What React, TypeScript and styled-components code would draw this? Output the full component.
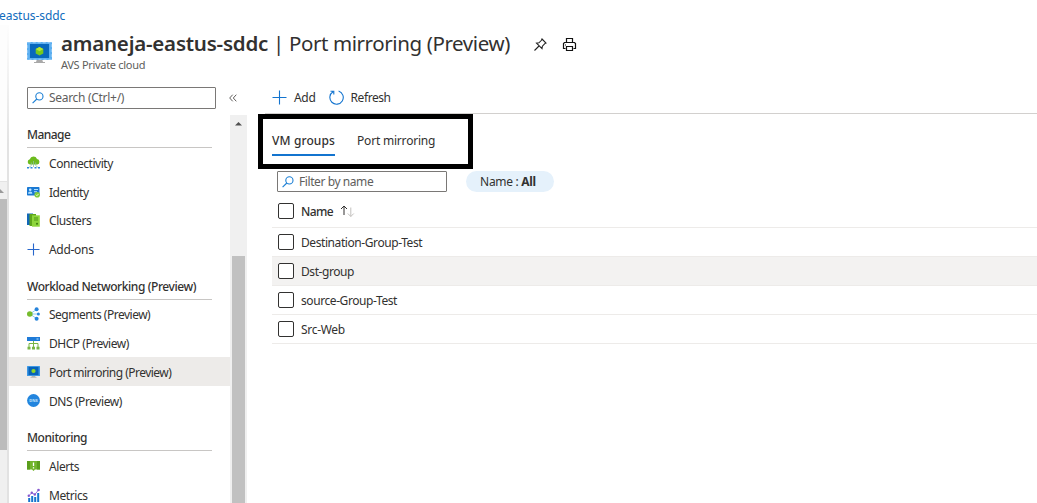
import React from 'react';
import styled, { createGlobalStyle } from 'styled-components';

const GlobalStyle = createGlobalStyle`
  * { box-sizing: border-box; }
  body { margin: 0; background: #fff; overflow: hidden; }
  svg { display: block; flex: none; }
`;

const Page = styled.div`
  display: flex;
  flex-direction: column;
  width: 1037px;
  height: 503px;
  overflow: hidden;
  background: #fff;
  color: #323130;
  font: 12px/16px 'Noto Sans', 'Open Sans', sans-serif;
`;
const Label = styled.span<{ $track?: number }>`
  white-space: pre;
  letter-spacing: ${(p) => p.$track ?? -0.42}px;
`;
const Breadcrumb = styled.div`
  height: 25px;
  padding-top: 8px;
  margin-left: -1px;
  color: #0f6cbd;
`;
const Body = styled.div`
  display: flex;
  flex: 1;
  min-height: 0;
`;
const Rail = styled.div`
  display: flex;
  flex-direction: column;
  flex: none;
  width: 7px;
  padding-top: 156px;
  background: #fdfdfd;
`;
const RailTrack = styled.div`
  flex: 1;
  background: #f0f0f0;
  border-top: 1px solid #e3e3e3;
`;
const RailArrow = styled.div`
  height: 17px;
  padding-top: 7px;
`;
const RailThumb = styled.div`
  height: 251px;
  background: #bcbcbc;
`;
const Edge = styled.div`
  flex: none;
  width: 2px;
  background: linear-gradient(180deg, #fdfdfd, #e2e2e2 25%);
`;
const Blade = styled.div`
  display: flex;
  flex-direction: column;
  flex: 1;
  min-width: 0;
`;
const Header = styled.header`
  display: flex;
  height: 62px;
  padding: 0 0 0 18px;
`;
const HeaderIcon = styled.div`
  width: 34px;
  padding-top: 17px;
`;
const Titles = styled.div`
  width: 450px;
  padding-top: 4px;
`;
const Title = styled.h1`
  margin: 0;
  display: flex;
  white-space: pre;
  font-size: 20.5px;
  line-height: 29px;
  font-weight: 400;
  color: #323130;
  b { font-weight: 600; }
`;
const Subtitle = styled.div`
  font-size: 11px;
  line-height: 14px;
  color: #605e5c;
`;
const HeaderActions = styled.div`
  display: flex;
  gap: 14px;
  padding: 12px 0 0 22px;
`;
const Columns = styled.div`
  display: flex;
  flex: 1;
  min-height: 0;
`;
const Sidebar = styled.nav`
  flex: none;
  width: 238px;
  display: flex;
  flex-direction: column;
`;
const SearchRow = styled.div`
  display: flex;
  align-items: center;
  gap: 13px;
  height: 22px;
  margin-left: 18px;
`;
const Field = styled.div<{ $width: number; $height?: number }>`
  display: flex;
  align-items: center;
  gap: 5px;
  width: ${(p) => p.$width}px;
  height: ${(p) => p.$height ?? 22}px;
  padding-left: 4px;
  border: 1px solid #7a7876;
  border-radius: 1px;
  color: #605e5c;
`;
const MenuArea = styled.div`
  display: flex;
  flex: 1;
  min-height: 0;
  margin-top: 2.6px;
`;
const MenuList = styled.div`
  width: 221px;
`;
const GroupHeading = styled.h2`
  display: flex;
  align-items: flex-end;
  height: 36.4px;
  margin: 0 18px;
  padding-bottom: 4px;
  border-bottom: 1px solid #c8c6c4;
  font-size: 12px;
  line-height: 16px;
  font-weight: 500;
`;
const MenuItem = styled.div<{ $selected?: boolean }>`
  display: flex;
  align-items: center;
  gap: 9px;
  height: 28.8px;
  padding: 3px 0 0 18px;
  background: ${(p) => (p.$selected ? '#edebe9' : 'transparent')};
  svg { margin-top: -2px; }
`;
const Scrollbar = styled.div`
  width: 17px;
  margin-top: 3.4px;
  padding: 6px 2px 0;
  background: #f0f0f0;
  display: flex;
  flex-direction: column;
  align-items: center;
`;
const Thumb = styled.div`
  flex: 1;
  width: 13px;
  margin-top: 130px;
  background: #c1c1c1;
`;
const Content = styled.main`
  flex: 1;
  min-width: 0;
  padding-left: 11px;
`;
const Toolbar = styled.div`
  display: flex;
  align-items: center;
  height: 27px;
  margin-left: 7px;
  padding: 0 0 5px 7px;
  border-bottom: 1px solid #d2d0ce;
`;
const Command = styled.div<{ $gap: number }>`
  display: flex;
  align-items: center;
  gap: ${(p) => p.$gap}px;
  margin-right: 13px;
`;
const TabFrame = styled.div`
  display: flex;
  gap: 22px;
  width: 215px;
  height: 55px;
  border: 5px solid #000;
  padding: 14px 0 0 9px;
`;
const Tab = styled.div<{ $active?: boolean }>`
  height: 23px;
  font-weight: ${(p) => (p.$active ? 500 : 400)};
  border-bottom: ${(p) => (p.$active ? '2px solid #1374cf' : '0')};
`;
const Filters = styled.div`
  display: flex;
  gap: 19px;
  margin: 2px 0 0 19px;
`;
const Pill = styled.div`
  display: flex;
  align-items: center;
  justify-content: center;
  width: 88px;
  height: 21px;
  padding-right: 4px;
  border-radius: 11px;
  background: #e5f1fb;
  b { font-weight: 700; }
`;
const Row = styled.div<{ $head?: boolean; $hover?: boolean }>`
  display: flex;
  align-items: center;
  gap: 7px;
  height: ${(p) => (p.$head ? 36 : 29)}px;
  margin-left: 14px;
  padding: ${(p) => (p.$head ? 2 : 0)}px 0 0 6px;
  border-bottom: 1px solid #edebe9;
  background: ${(p) => (p.$hover ? '#f3f2f1' : 'transparent')};
  font-weight: ${(p) => (p.$head ? 500 : 400)};
  span:last-of-type { margin-top: 2px; }
`;
const Checkbox = styled.span`
  width: 16px;
  height: 16px;
  border: 1px solid #323130;
  border-radius: 2px;
  background: #fff;
`;

const MonitorIcon = ({ width = 25, height = 22 }: { width?: number; height?: number }) => (
  <svg width={width} height={height} viewBox="0 0 25 22">
    <path d="M10 17h5l1 3h2v1H7v-1h2z" fill="#a9a9a9" />
    <rect width="25" height="18" rx="1" fill="#5aaef0" />
    <rect x=".7" y=".7" width="23.6" height="16.6" fill="none" stroke="#93cbf7" strokeDasharray="3 2" />
    <rect x="3" y="2" width="19" height="14" fill="#0868bd" />
    <path d="M12.5 5l3.8 2v4.4l-3.8 2.2-3.8-2.2V7z" fill="#76c91e" />
    <path d="M12.5 5l3.8 2-3.8 2.2L8.7 7z" fill="#b5e834" />
  </svg>
);
const SmallMonitorIcon = () => (
  <svg width="13" height="12" viewBox="0 0 13 12">
    <path d="M5 9h3l.5 2h1v.7h-6V11h1z" fill="#b4b4b4" />
    <rect width="13" height="10" rx=".5" fill="#3c97e4" />
    <rect x="1.5" y="1" width="10" height="8" fill="#0762b8" />
    <circle cx="6.5" cy="5" r="2.1" fill="#8fd626" />
  </svg>
);
const SearchIcon = () => (
  <svg width="12" height="12" viewBox="0 0 12 12" fill="none" stroke="#1b7fd4" strokeWidth="1.1">
    <circle cx="7.4" cy="4.4" r="3.6" />
    <path d="M4.8 7L.6 11.2" />
  </svg>
);
const PinIcon = () => (
  <svg width="15" height="15" viewBox="0 0 15 15" fill="none" stroke="#222" strokeWidth="1.1">
    <path d="M9 2l4 4-1.2.6-2.4 2.6-.4 2.5L3.5 6.2l2.4-.4 2.6-2.5zM6 9L1.5 13.5" />
  </svg>
);
const PrintIcon = () => (
  <svg width="15" height="15" viewBox="0 0 15 15" fill="none" stroke="#111" strokeWidth="1.2">
    <path d="M4.5 6V1.5h6V6M3.5 11.5h-2v-5l1-1h10l1 1v5h-2M4.5 9.5h6v4h-6zM3 8h1" />
  </svg>
);
const PlusIcon = ({ size = 15, color = '#1374cf' }: { size?: number; color?: string }) => (
  <svg width={size} height={size} viewBox={`0 0 ${size} ${size}`} stroke={color} strokeWidth="1.1">
    <path d={`M${size / 2} .5v${size - 1}M.5 ${size / 2}h${size - 1}`} />
  </svg>
);
const RefreshIcon = () => (
  <svg width="15" height="15" viewBox="0 0 15 15" fill="none" stroke="#1374cf" strokeWidth="1.1">
    <path d="M9.6 1.1A6.7 6.7 0 1 1 4 1.8M1.5 1.3h3.3v3.3" />
  </svg>
);
const ConnectivityIcon = () => (
  <svg width="13" height="13" viewBox="0 0 13 13">
    <path d="M3 8.5a2.7 2.7 0 0 1-.2-5.3A3.8 3.8 0 0 1 10 3a2.8 2.8 0 0 1 .3 5.5z" fill="#6cbb1d" />
    <path d="M6.5 5v6M4.3 6.5v3L2 11.5M8.7 6.5v3l2.3 2" stroke="#8cc3a0" strokeWidth=".8" fill="none" />
    <path d="M0 11h2v1.5H0zM3.5 11h2v1.5h-2zM7.5 11h2v1.5h-2zM11 11h2v1.5h-2z" fill="#2f86db" />
  </svg>
);
const IdentityIcon = () => (
  <svg width="13" height="13" viewBox="0 0 13 13">
    <rect y="2" width="12.5" height="8.5" rx=".7" fill="#1a79d3" />
    <circle cx="3.2" cy="4.8" r="1.3" fill="#c6e9ff" />
    <path d="M1 8.8a2.2 2.2 0 0 1 4.4 0zM7 4h4v1H7zM7 6.2h3v1H7z" fill="#aee0ff" />
    <circle cx="10.2" cy="9.7" r="2.8" fill="#7fca3a" />
    <path d="M8.9 9.7l1 1 1.7-1.8" stroke="#fff" strokeWidth=".8" fill="none" />
  </svg>
);
const ClustersIcon = () => (
  <svg width="13" height="14" viewBox="0 0 13 14">
    <path d="M0 .5h6V12H0z" fill="#1267b8" />
    <path d="M2.5 1h6.5v12H2.5z" fill="#5ea61b" />
    <path d="M5 2.3h7.8v11.4H5z" fill="#8dd63b" />
    <path d="M7 5h4M7 7h4" stroke="#4e951a" />
    <circle cx="10" cy="10.7" r="1" fill="#39790d" />
  </svg>
);
const SegmentsIcon = () => (
  <svg width="13" height="14" viewBox="0 0 13 14">
    <path d="M9.5 2.4L3 7l6.5 4.6M3 7h8" stroke="#8ac8f2" fill="none" strokeWidth="1" />
    <circle cx="2.8" cy="7" r="2.8" fill="#76bc2d" />
    <circle cx="9.6" cy="2.3" r="2" fill="#2784db" />
    <circle cx="11.4" cy="7" r="1.5" fill="#2784db" />
    <circle cx="9.6" cy="11.7" r="2" fill="#2784db" />
  </svg>
);
const DhcpIcon = () => (
  <svg width="13" height="13" viewBox="0 0 13 13">
    <path d="M0 0h13v4H0z" fill="#1f7bd8" />
    <path d="M9.5 2h2" stroke="#b8e5ff" />
    <path d="M6.5 4v6M2 10V6.5h9V10" fill="none" stroke="#79b644" />
    <path d="M.5 9.8h3v2.7h-3zM5 9.8h3v2.7H5zM9.5 9.8h3v2.7h-3z" fill="#79b644" />
  </svg>
);
const DnsIcon = () => (
  <svg width="13" height="13" viewBox="0 0 13 13">
    <circle cx="6.5" cy="6.5" r="6.4" fill="#2385de" />
    <text x="6.5" y="8" textAnchor="middle" fontSize="4" fontWeight="700" fill="#c5e5fb" fontFamily="Noto Sans">DNS</text>
  </svg>
);
const AlertsIcon = () => (
  <svg width="13" height="12" viewBox="0 0 13 12">
    <path d="M0 1h13v8.5H8L6.5 11 5 9.5H0z" fill="#72b52c" />
    <path d="M0 1h3v8.5H0zM10 1h3v8.5h-3z" fill="#5b9e1d" />
    <path d="M6.5 2.5V6M6.5 7.2v1.3" stroke="#fff" strokeWidth="1.3" />
  </svg>
);
const MetricsIcon = () => (
  <svg width="13" height="14" viewBox="0 0 13 14">
    <path d="M1.2 10h2v4h-2zM4.2 8h2v6h-2zM7.2 9h2v5h-2zM10.2 5h2v9h-2z" fill="#1674ce" />
    <path d="M1.8 7.8l3-3 3 1.7L11.5 2" stroke="#9b70dc" fill="none" />
    <g fill="#8557cf">
      <circle cx="1.8" cy="7.8" r="1.2" /><circle cx="4.8" cy="4.8" r="1.2" />
      <circle cx="7.8" cy="6.5" r="1.2" /><circle cx="11.5" cy="2" r="1.3" />
    </g>
  </svg>
);
const SortIcon = () => (
  <svg width="15" height="12" viewBox="0 0 15 12" fill="none">
    <path d="M4 10V1M1 4l3-3 3 3" stroke="#323130" />
    <path d="M10.8 2.5v9M7.8 8.5l3 3 3-3" stroke="#c2c0be" />
  </svg>
);

type Item = { label: string; icon: React.ReactNode; selected?: boolean; track?: number };
const groups: { title: string; track?: number; items: Item[] }[] = [
  {
    title: 'Manage',
    track: -0.55,
    items: [
      { label: 'Connectivity', icon: <ConnectivityIcon />, track: -0.45 },
      { label: 'Identity', icon: <IdentityIcon />, track: -0.5 },
      { label: 'Clusters', icon: <ClustersIcon /> },
      { label: 'Add-ons', icon: <PlusIcon size={13} color="#2867cc" />, track: -0.3 },
    ],
  },
  {
    title: 'Workload Networking (Preview)',
    items: [
      { label: 'Segments (Preview)', icon: <SegmentsIcon />, track: -0.5 },
      { label: 'DHCP (Preview)', icon: <DhcpIcon />, track: -0.47 },
      { label: 'Port mirroring (Preview)', icon: <SmallMonitorIcon />, selected: true, track: -0.53 },
      { label: 'DNS (Preview)', icon: <DnsIcon /> },
    ],
  },
  {
    title: 'Monitoring',
    items: [
      { label: 'Alerts', icon: <AlertsIcon /> },
      { label: 'Metrics', icon: <MetricsIcon /> },
    ],
  },
];
const rows: { name: string; track?: number; hover?: boolean }[] = [
  { name: 'Destination-Group-Test' },
  { name: 'Dst-group', hover: true },
  { name: 'source-Group-Test' },
  { name: 'Src-Web', track: -0.3 },
];

export default function App() {
  return (
    <Page>
      <GlobalStyle />
      <Breadcrumb><Label $track={-0.05}>eastus-sddc</Label></Breadcrumb>
      <Body>
        <Rail>
          <RailTrack>
            <RailArrow>
              <svg width="5" height="5" viewBox="0 0 5 5"><path d="M0 0l4 4H0z" fill="#9a9a9a" /></svg>
            </RailArrow>
            <RailThumb />
          </RailTrack>
        </Rail>
        <Edge />
        <Blade>
          <Header>
            <HeaderIcon><MonitorIcon /></HeaderIcon>
            <Titles>
              <Title>
                <b><Label $track={-0.22}>amaneja-eastus-sddc</Label></b>
                <Label $track={-0.4}> | Port mirroring (Preview)</Label>
              </Title>
              <Subtitle><Label $track={-0.3}>AVS Private cloud</Label></Subtitle>
            </Titles>
            <HeaderActions><PinIcon /><PrintIcon /></HeaderActions>
          </Header>
          <Columns>
            <Sidebar>
              <SearchRow>
                <Field $width={189}><SearchIcon /><Label $track={-0.3}>Search (Ctrl+/)</Label></Field>
                <svg width="8" height="8" viewBox="0 0 8 8" fill="none" stroke="#605e5c">
                  <path d="M3.7 .7L.7 4l3 3.3M7.3 .7L4.3 4l3 3.3" />
                </svg>
              </SearchRow>
              <MenuArea>
                <MenuList>
                  {groups.map((g) => (
                    <React.Fragment key={g.title}>
                      <GroupHeading><Label $track={g.track}>{g.title}</Label></GroupHeading>
                      {g.items.map((i) => (
                        <MenuItem key={i.label} $selected={i.selected}>
                          {i.icon}<Label $track={i.track}>{i.label}</Label>
                        </MenuItem>
                      ))}
                    </React.Fragment>
                  ))}
                </MenuList>
                <Scrollbar>
                  <svg width="7" height="5" viewBox="0 0 7 5"><path d="M0 4.5L3.5 1 7 4.5z" fill="#505050" /></svg>
                  <Thumb />
                </Scrollbar>
              </MenuArea>
            </Sidebar>
            <Content>
              <Toolbar>
                <Command $gap={7}><PlusIcon /><Label $track={-0.3}>Add</Label></Command>
                <Command $gap={7}><RefreshIcon /><Label>Refresh</Label></Command>
              </Toolbar>
              <TabFrame>
                <Tab $active><Label $track={0.12}>VM groups</Label></Tab>
                <Tab><Label $track={-0.2}>Port mirroring</Label></Tab>
              </TabFrame>
              <Filters>
                <Field $width={170} $height={21}><SearchIcon /><Label>Filter by name</Label></Field>
                <Pill><Label $track={-0.3}>Name : <b>All</b></Label></Pill>
              </Filters>
              <Row $head><Checkbox /><Label $track={-0.6}>Name</Label><SortIcon /></Row>
              {rows.map((r) => (
                <Row key={r.name} $hover={r.hover}><Checkbox /><Label $track={r.track}>{r.name}</Label></Row>
              ))}
            </Content>
          </Columns>
        </Blade>
      </Body>
    </Page>
  );
}
